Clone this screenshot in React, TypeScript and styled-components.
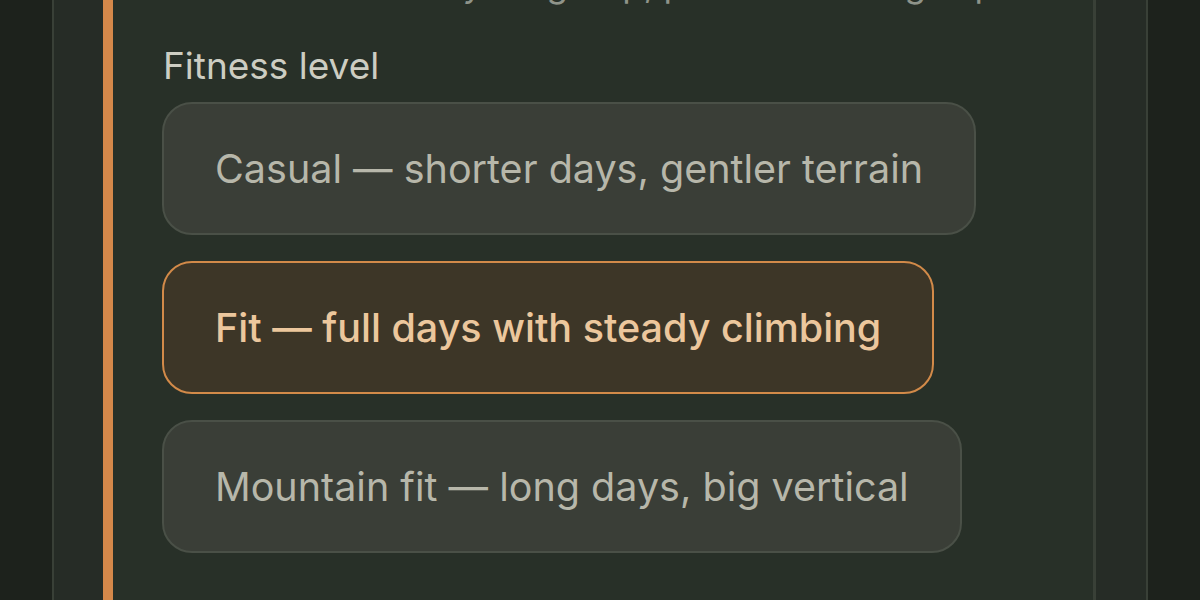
import React, { useState } from 'react';
import styled, { createGlobalStyle } from 'styled-components';

const GlobalStyle = createGlobalStyle`
  html, body {
    margin: 0;
    padding: 0;
    background: #1d221c;
    height: 100%;
    overflow: hidden;
  }
  #root {
    height: 100%;
  }
`;

const levels = [
  { id: 'casual', label: 'Casual — shorter days, gentler terrain' },
  { id: 'fit', label: 'Fit — full days with steady climbing' },
  { id: 'mountain', label: 'Mountain fit — long days, big vertical' },
];

export default function App() {
  const [selected, setSelected] = useState('fit');

  return (
    <>
      <GlobalStyle />
      <Frame>
        <Card>
          <Hint>Tell us a bit about your group, pace and hiking experience</Hint>
          <Field>
            <Label>Fitness level</Label>
            <Options>
              {levels.map((level) => (
                <Option
                  key={level.id}
                  $active={selected === level.id}
                  onClick={() => setSelected(level.id)}
                >
                  {level.label}
                </Option>
              ))}
            </Options>
          </Field>
          <Label>Trail preferences</Label>
        </Card>
      </Frame>
    </>
  );
}

const Frame = styled.div`
  box-sizing: border-box;
  height: 100%;
  margin: 0 52px;
  padding: 0 50px 0 49px;
  background: #262c26;
  border-left: 2px solid #394037;
  border-right: 2px solid #394037;
  overflow: hidden;
`;

const Card = styled.div`
  box-sizing: border-box;
  min-height: 100%;
  padding: 0 0 0 49px;
  background: #283028;
  border-left: 10px solid #d4884a;
  border-right: 3px solid #394037;
  font-family: Inter, 'Noto Sans', sans-serif;
`;

const Hint = styled.p`
  margin: -40px 0 0;
  font-size: 35px;
  line-height: 48px;
  color: #8f948a;
  white-space: nowrap;
`;

const Field = styled.div`
  display: flex;
  flex-direction: column;
  margin-top: 37px;
`;

const Label = styled.div`
  font-size: 37px;
  line-height: 42px;
  color: #cdcdc2;
  margin: 0 0 15px 1px;
`;

const Options = styled.div`
  display: flex;
  flex-direction: column;
  align-items: flex-start;
  gap: 26px;
  margin-bottom: 42px;
`;

const Option = styled.button<{ $active?: boolean }>`
  box-sizing: border-box;
  height: 133px;
  padding: 0 51px;
  border-radius: 30px;
  border: 2px solid ${(p) => (p.$active ? '#d28a49' : '#4a5047')};
  background: ${(p) => (p.$active ? '#3d3627' : '#3a3e37')};
  color: ${(p) => (p.$active ? '#ecc79d' : '#b7b7aa')};
  font-family: Inter, 'Noto Sans', sans-serif;
  font-size: 39.5px;
  font-weight: ${(p) => (p.$active ? 500 : 400)};
  text-align: left;
  cursor: pointer;
`;
